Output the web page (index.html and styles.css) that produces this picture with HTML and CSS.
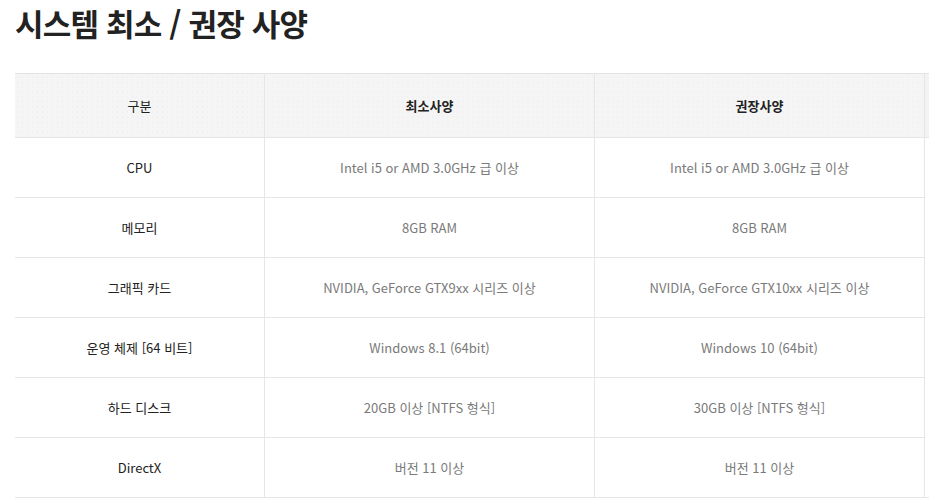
FILE: index.html
```html
<!DOCTYPE html>
<html lang="ko">
<head>
<meta charset="utf-8">
<title>시스템 최소 / 권장 사양</title>
<link rel="stylesheet" href="styles.css">
</head>
<body>
<h1 class="title">시스템 최소 / 권장 사양</h1>
<table class="spec">
  <thead>
    <tr>
      <th class="c1 th-plain">구분</th>
      <th class="c2">최소사양</th>
      <th class="c3">권장사양</th>
      <th class="c4"></th>
    </tr>
  </thead>
  <tbody>
    <tr><td class="label">CPU</td><td>Intel i5 or AMD 3.0GHz 급 이상</td><td>Intel i5 or AMD 3.0GHz 급 이상</td><td class="c4"></td></tr>
    <tr><td class="label">메모리</td><td>8GB RAM</td><td>8GB RAM</td><td class="c4"></td></tr>
    <tr><td class="label">그래픽 카드</td><td>NVIDIA, GeForce GTX9xx 시리즈 이상</td><td>NVIDIA, GeForce GTX10xx 시리즈 이상</td><td class="c4"></td></tr>
    <tr><td class="label">운영 체제 [64 비트]</td><td>Windows 8.1 (64bit)</td><td>Windows 10 (64bit)</td><td class="c4"></td></tr>
    <tr><td class="label">하드 디스크</td><td>20GB 이상 [NTFS 형식]</td><td>30GB 이상 [NTFS 형식]</td><td class="c4"></td></tr>
    <tr class="last"><td class="label">DirectX</td><td>버전 11 이상</td><td>버전 11 이상</td><td class="c4"></td></tr>
  </tbody>
</table>
</body>
</html>
```

FILE: styles.css
```css
html, body {
  margin: 0;
  padding: 0;
  background: #fff;
  overflow: hidden;
}
body {
  padding: 0 0 0 15px;
  font-family: "Noto Sans CJK KR", "Noto Sans", sans-serif;
  color: #222;
}
.title {
  margin: 0;
  padding: 0;
  font-size: 31px;
  line-height: 45px;
  font-weight: 700;
  letter-spacing: -0.8px;
  color: #222;
}
.spec {
  margin-top: 28px;
  border-collapse: collapse;
  table-layout: fixed;
  width: 930px;
}
.spec th, .spec td {
  text-align: center;
  vertical-align: middle;
  padding: 0;
  border: 1px solid #e6e6e6;
  font-size: 13px;
}
.spec th {
  height: 63px;
  font-weight: 700;
  color: #222;
  border-top-color: #e2e2e2;
  background-color: #f5f5f5;
  background-image: radial-gradient(circle, #e9e9e9 0.7px, transparent 0.9px);
  background-size: 5px 5px;
}
.spec th.th-plain { font-weight: 400; }
.spec td {
  height: 59px;
  color: #7a7a7a;
}
.spec td.label { color: #222; }
.spec .c1 { width: 249px; }
.spec tr > :first-child { border-left: none; }
.spec .c2 { width: 329px; }
.spec .c3 { width: 329px; }
.spec th.c4 {
  background: #f3f3f3;
  border-right: none;
}
.spec td.c4 {
  border-top: none;
  border-bottom: none;
  border-right: none;
}
.spec tr.last td { border-bottom: 1px solid #e6e6e6; }
```
